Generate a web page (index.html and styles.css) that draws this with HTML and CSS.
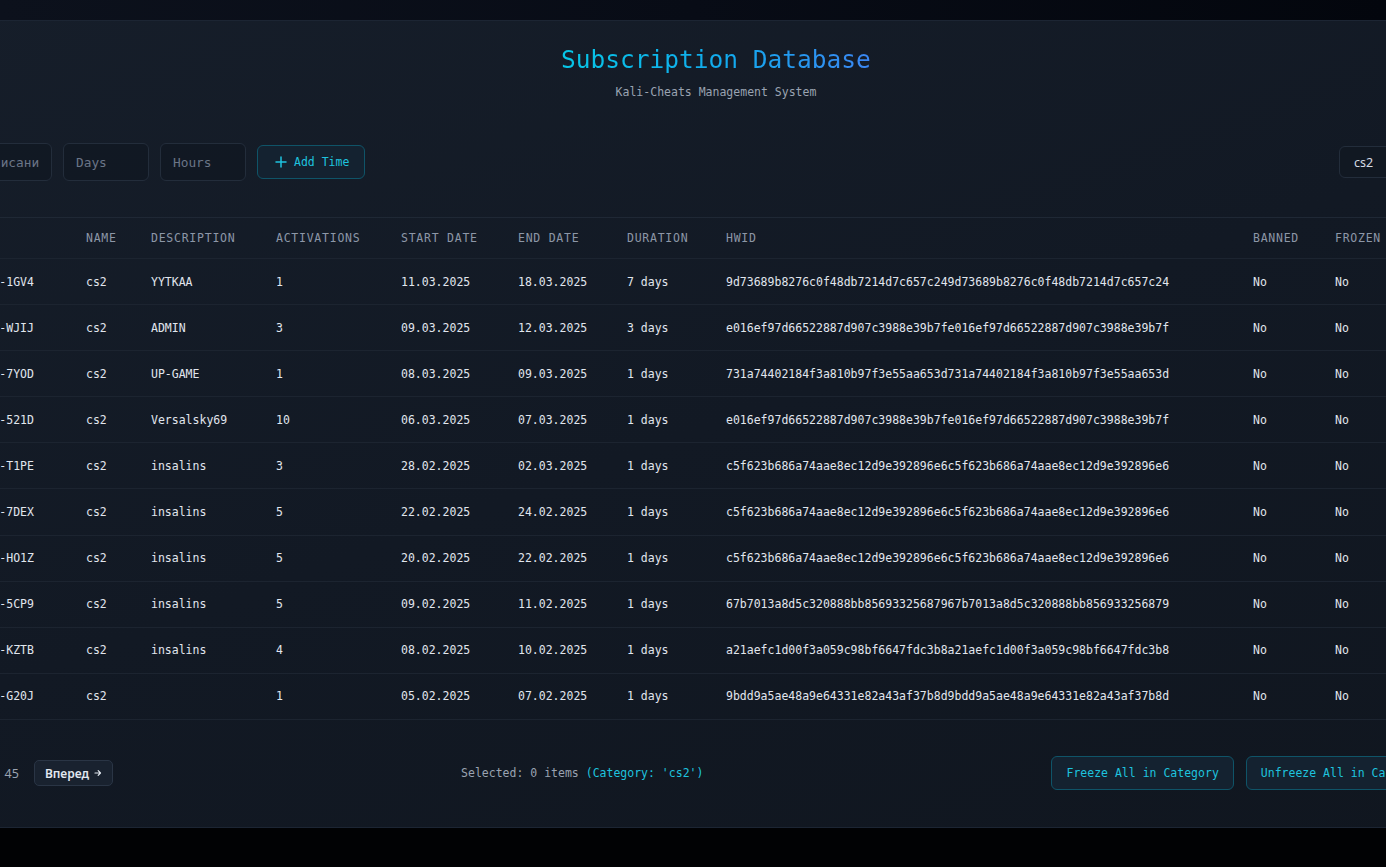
FILE: index.html
```html
<!DOCTYPE html>
<html lang="en">
<head>
<meta charset="utf-8">
<title>Subscription Database</title>
<link rel="stylesheet" href="styles.css">
</head>
<body>
<div class="page">
  <section class="panel">
    <header class="panel-head">
      <h1 class="title">Subscription Database</h1>
      <p class="subtitle">Kali-Cheats Management System</p>
    </header>

    <div class="toolbar">
      <div class="tool-group">
        <input class="field field-key" placeholder="Ключ">
        <input class="field field-desc" placeholder="Новое описание">
        <input class="field field-num" placeholder="Days">
        <input class="field field-num" placeholder="Hours">
        <button class="btn-accent btn-add">
          <svg class="icon-plus" viewBox="0 0 12 12" width="12" height="12"><path d="M6 1v10M1 6h10" fill="none" stroke="currentColor" stroke-width="1.5" stroke-linecap="round"/></svg>
          Add Time
        </button>
      </div>
      <div class="tool-group">
        <div class="select">cs2</div>
        <button class="btn-ghost">Refresh</button>
      </div>
    </div>

    <table class="grid">
      <colgroup>
        <col class="c-check"><col class="c-id"><col class="c-name"><col class="c-desc"><col class="c-act"><col class="c-start"><col class="c-end"><col class="c-dur"><col class="c-hwid"><col class="c-flag"><col class="c-flag"><col class="c-actions">
      </colgroup>
      <thead>
        <tr><th></th><th>Key</th><th>Name</th><th>Description</th><th>Activations</th><th>Start Date</th><th>End Date</th><th>Duration</th><th>HWID</th><th>Banned</th><th>Frozen</th><th>Actions</th></tr>
      </thead>
      <tbody>
        <tr><td><span class="box"></span></td><td>KALI-8F2Q-1GV4</td><td>cs2</td><td>YYTKAA</td><td>1</td><td>11.03.2025</td><td>18.03.2025</td><td>7 days</td><td>9d73689b8276c0f48db7214d7c657c249d73689b8276c0f48db7214d7c657c24</td><td>No</td><td>No</td><td>Edit</td></tr>
        <tr><td><span class="box"></span></td><td>KALI-3RTX-WJIJ</td><td>cs2</td><td>ADMIN</td><td>3</td><td>09.03.2025</td><td>12.03.2025</td><td>3 days</td><td>e016ef97d66522887d907c3988e39b7fe016ef97d66522887d907c3988e39b7f</td><td>No</td><td>No</td><td>Edit</td></tr>
        <tr><td><span class="box"></span></td><td>KALI-Q7MB-7YOD</td><td>cs2</td><td>UP-GAME</td><td>1</td><td>08.03.2025</td><td>09.03.2025</td><td>1 days</td><td>731a74402184f3a810b97f3e55aa653d731a74402184f3a810b97f3e55aa653d</td><td>No</td><td>No</td><td>Edit</td></tr>
        <tr><td><span class="box"></span></td><td>KALI-Z4KP-521D</td><td>cs2</td><td>Versalsky69</td><td>10</td><td>06.03.2025</td><td>07.03.2025</td><td>1 days</td><td>e016ef97d66522887d907c3988e39b7fe016ef97d66522887d907c3988e39b7f</td><td>No</td><td>No</td><td>Edit</td></tr>
        <tr><td><span class="box"></span></td><td>KALI-L9WC-T1PE</td><td>cs2</td><td>insalins</td><td>3</td><td>28.02.2025</td><td>02.03.2025</td><td>1 days</td><td>c5f623b686a74aae8ec12d9e392896e6c5f623b686a74aae8ec12d9e392896e6</td><td>No</td><td>No</td><td>Edit</td></tr>
        <tr><td><span class="box"></span></td><td>KALI-B2NV-7DEX</td><td>cs2</td><td>insalins</td><td>5</td><td>22.02.2025</td><td>24.02.2025</td><td>1 days</td><td>c5f623b686a74aae8ec12d9e392896e6c5f623b686a74aae8ec12d9e392896e6</td><td>No</td><td>No</td><td>Edit</td></tr>
        <tr><td><span class="box"></span></td><td>KALI-M5HU-HO1Z</td><td>cs2</td><td>insalins</td><td>5</td><td>20.02.2025</td><td>22.02.2025</td><td>1 days</td><td>c5f623b686a74aae8ec12d9e392896e6c5f623b686a74aae8ec12d9e392896e6</td><td>No</td><td>No</td><td>Edit</td></tr>
        <tr><td><span class="box"></span></td><td>KALI-R8YA-5CP9</td><td>cs2</td><td>insalins</td><td>5</td><td>09.02.2025</td><td>11.02.2025</td><td>1 days</td><td>67b7013a8d5c320888bb85693325687967b7013a8d5c320888bb856933256879</td><td>No</td><td>No</td><td>Edit</td></tr>
        <tr><td><span class="box"></span></td><td>KALI-D6JS-KZTB</td><td>cs2</td><td>insalins</td><td>4</td><td>08.02.2025</td><td>10.02.2025</td><td>1 days</td><td>a21aefc1d00f3a059c98bf6647fdc3b8a21aefc1d00f3a059c98bf6647fdc3b8</td><td>No</td><td>No</td><td>Edit</td></tr>
        <tr><td><span class="box"></span></td><td>KALI-W3FE-G20J</td><td>cs2</td><td></td><td>1</td><td>05.02.2025</td><td>07.02.2025</td><td>1 days</td><td>9bdd9a5ae48a9e64331e82a43af37b8d9bdd9a5ae48a9e64331e82a43af37b8d</td><td>No</td><td>No</td><td>Edit</td></tr>
      </tbody>
    </table>

    <footer class="panel-foot">
      <div class="pager">
        <button class="btn-page">Назад</button>
        <span class="page-info"><span>1</span><span>из</span><span>45</span></span>
        <button class="btn-page">Вперед <svg class="arrow" viewBox="0 0 8 8" width="8" height="8"><path d="M1 4h5.5M4.2 1.7L6.5 4 4.2 6.3" fill="none" stroke="currentColor" stroke-width="1.2" stroke-linecap="round" stroke-linejoin="round"/></svg></button>
      </div>
      <p class="selection">Selected: 0 items <span class="accent">(Category: 'cs2')</span></p>
      <div class="bulk">
        <button class="btn-accent btn-bulk">Freeze All in Category</button>
        <button class="btn-accent btn-bulk">Unfreeze All in Category</button>
        <button class="btn-accent btn-bulk btn-export">Export</button>
      </div>
    </footer>
  </section>
</div>
</body>
</html>
```
FILE: styles.css
```css
html, body {
  margin: 0;
  padding: 0;
  height: 100%;
  overflow: hidden;
  background: #010204;
}

body {
  font-family: "DejaVu Sans Mono", "Liberation Mono", monospace;
  font-size: 11.5px;
  color: #e2e8f0;
}

.page {
  padding-top: 20px;
  background: linear-gradient(90deg, #0c111c 0%, #080c16 50%, #03060d 100%);
}

.panel {
  box-sizing: border-box;
  width: 1760px;
  margin-left: -164px;
  padding: 0 23px;
  border: 1px solid #1c2533;
  background: linear-gradient(160deg, #161e2a 0%, #121924 50%, #10161f 100%);
}

.panel-head {
  padding-top: 24px;
  text-align: center;
}

.title {
  display: inline-block;
  margin: 0;
  font-size: 24.5px;
  line-height: 30px;
  font-weight: normal;
  background: linear-gradient(90deg, #06c6e6 0%, #13a9ee 55%, #3b86f2 100%);
  -webkit-background-clip: text;
  background-clip: text;
  color: transparent;
}

.subtitle {
  margin: 9px 0 0;
  font-size: 11.5px;
  line-height: 16px;
  color: #9aa3b1;
}

.toolbar {
  display: flex;
  justify-content: space-between;
  align-items: center;
  margin-top: 43px;
  height: 38px;
}

.tool-group {
  display: flex;
  align-items: center;
  gap: 11px;
}

.field {
  box-sizing: border-box;
  height: 38px;
  padding: 0 12px;
  border: 1px solid #232d3b;
  border-radius: 6px;
  background: rgba(15, 21, 31, 0.55);
  color: #e2e8f0;
  font-family: "DejaVu Sans Mono", monospace;
  font-size: 12.8px;
  outline: none;
}

.field::placeholder {
  color: #6b7587;
}

.field-key { width: 55px; }
.field-desc { width: 126px; }
.field-num { width: 86px; }

.btn-accent {
  box-sizing: border-box;
  display: inline-flex;
  align-items: center;
  height: 34px;
  padding: 0 14px;
  border: 1px solid #0f5468;
  border-radius: 6px;
  background: #142230;
  color: #1ec3df;
  font-family: "DejaVu Sans Mono", monospace;
  font-size: 11.5px;
  cursor: pointer;
}

.btn-add {
  width: 108px;
  padding: 0 0 0 17px;
  gap: 7px;
}

.icon-plus {
  flex: none;
}

.select {
  box-sizing: border-box;
  width: 140px;
  height: 32px;
  display: flex;
  align-items: center;
  padding: 0 14px;
  border: 1px solid #232d3b;
  border-radius: 6px;
  background: #111822;
  color: #d5dbe4;
  font-family: "Noto Sans", "Open Sans", sans-serif;
  font-size: 12.5px;
}

.btn-ghost {
  box-sizing: border-box;
  width: 82px;
  height: 32px;
  border: 1px solid #232d3b;
  border-radius: 6px;
  background: #172130;
  color: #d5dbe4;
  font-family: "Noto Sans", sans-serif;
  font-size: 12px;
}

.grid {
  width: 1712px;
  margin-top: 36px;
  table-layout: fixed;
  border-collapse: collapse;
  border-top: 1px solid #1f2835;
}

.c-check { width: 57px; }
.c-id { width: 149px; }
.c-name { width: 65px; }
.c-desc { width: 125px; }
.c-act { width: 125px; }
.c-start { width: 117px; }
.c-end { width: 109px; }
.c-dur { width: 99px; }
.c-hwid { width: 527px; }
.c-flag { width: 82px; }
.c-actions { width: 175px; }

.grid th,
.grid td {
  padding: 0 20px;
  text-align: left;
  white-space: nowrap;
  overflow: hidden;
  border-bottom: 1px solid #1c2430;
}

.grid th {
  height: 40px;
  font-weight: normal;
  text-transform: uppercase;
  letter-spacing: 0.75px;
  color: #8d97a7;
}

.grid td {
  height: 45.1px;
  color: #e1e6ee;
}

.box {
  display: inline-block;
  width: 13px;
  height: 13px;
  border: 1px solid #3a4556;
  border-radius: 3px;
  vertical-align: middle;
}

.panel-foot {
  display: flex;
  justify-content: space-between;
  align-items: center;
  height: 107px;
}

.pager {
  display: flex;
  align-items: center;
  justify-content: flex-end;
  gap: 15px;
  width: 253px;
  font-family: "Noto Sans", "Open Sans", sans-serif;
}

.page-info {
  display: flex;
  gap: 10px;
  font-size: 12.5px;
  color: #9aa3b1;
  white-space: nowrap;
}

.btn-page {
  box-sizing: border-box;
  display: inline-flex;
  align-items: center;
  gap: 5px;
  height: 26px;
  padding: 0 10px;
  border: 1px solid #2a3545;
  border-radius: 5px;
  background: #19222f;
  color: #e2e8f0;
  font-family: "Noto Sans", "Open Sans", sans-serif;
  font-size: 12px;
  font-weight: 600;
  white-space: nowrap;
}

.arrow {
  flex: none;
}

.selection {
  margin: 0;
  color: #9aa3b1;
}

.accent {
  color: #1ec3df;
}

.bulk {
  display: flex;
  gap: 12px;
}

.btn-export {
  width: 118px;
  justify-content: center;
}
```
